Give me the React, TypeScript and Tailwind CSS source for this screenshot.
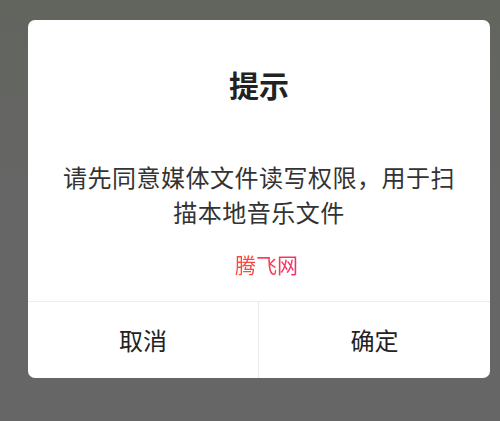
export default function App() {
  return (
    <div className="h-[421px] w-full overflow-hidden bg-gradient-to-b from-[#62655e] via-[#666666] to-[#666666] pt-[20px] font-['Noto_Sans_CJK_SC','Noto_Sans',sans-serif]">
      <div className="mx-[28px] w-[462px] overflow-hidden rounded-[7px] bg-white">
        <div className="px-[28px] pt-[44px] pb-[22px] text-center">
          <h3 className="text-[30px] leading-[40px] font-bold text-[#222]">提示</h3>
          <p className="mt-[55px] text-[24px] leading-[35px] tracking-[0.5px] text-[#333]">
            请先同意媒体文件读写权限，用于扫描本地音乐文件
          </p>
          <p className="mt-[20px] pl-[15px] text-[21px] leading-[30px]">
            <span className="bg-gradient-to-r from-[#ff4b30] to-[#f0306a] bg-clip-text text-transparent">腾飞网</span>
          </p>
        </div>
        <div className="grid h-[77px] grid-cols-2 border-t border-[#ececec]">
          <button className="border-r border-[#ececec] text-[24px] text-[#222]">取消</button>
          <button className="text-[24px] text-[#222]">确定</button>
        </div>
      </div>
    </div>
  );
}
